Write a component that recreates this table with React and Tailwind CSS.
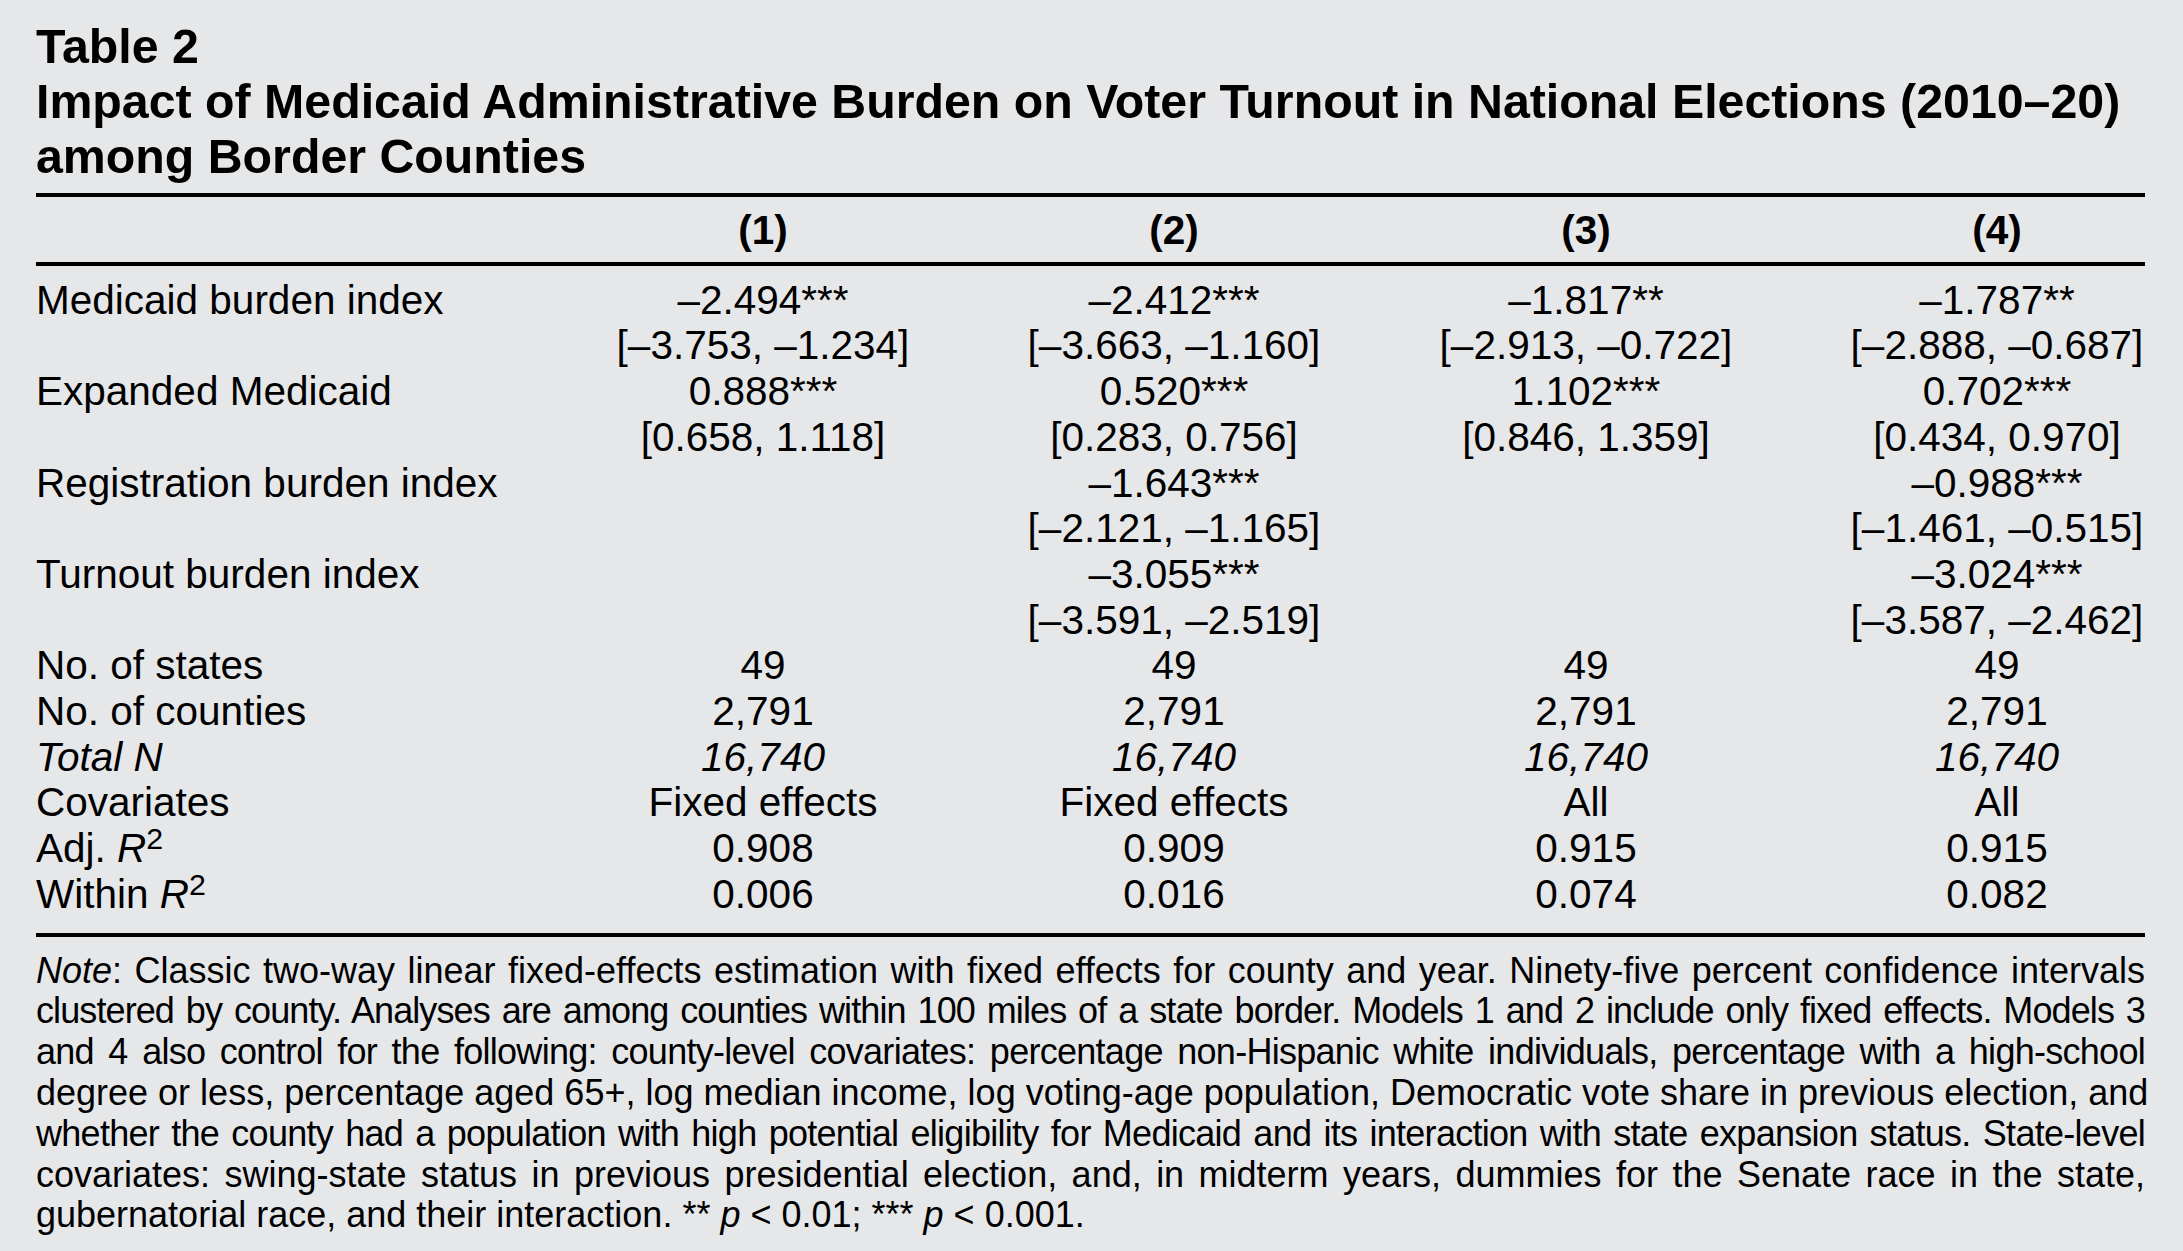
const rows = [
  ['Medicaid burden index', '–2.494***', '–2.412***', '–1.817**', '–1.787**'],
  ['', '[–3.753, –1.234]', '[–3.663, –1.160]', '[–2.913, –0.722]', '[–2.888, –0.687]'],
  ['Expanded Medicaid', '0.888***', '0.520***', '1.102***', '0.702***'],
  ['', '[0.658, 1.118]', '[0.283, 0.756]', '[0.846, 1.359]', '[0.434, 0.970]'],
  ['Registration burden index', '', '–1.643***', '', '–0.988***'],
  ['', '', '[–2.121, –1.165]', '', '[–1.461, –0.515]'],
  ['Turnout burden index', '', '–3.055***', '', '–3.024***'],
  ['', '', '[–3.591, –2.519]', '', '[–3.587, –2.462]'],
  ['No. of states', '49', '49', '49', '49'],
  ['No. of counties', '2,791', '2,791', '2,791', '2,791'],
  ['total', '16,740', '16,740', '16,740', '16,740'],
  ['Covariates', 'Fixed effects', 'Fixed effects', 'All', 'All'],
  ['adj', '0.908', '0.909', '0.915', '0.915'],
  ['within', '0.006', '0.016', '0.074', '0.082'],
];

function Label({ value }) {
  if (value === 'total') return <i>Total N</i>;
  if (value === 'adj')
    return (
      <>
        Adj. <i>R</i>
        <sup className="top-[-0.42em]">2</sup>
      </>
    );
  if (value === 'within')
    return (
      <>
        Within <i>R</i>
        <sup className="top-[-0.42em]">2</sup>
      </>
    );
  return value;
}

const grid = 'grid grid-cols-[465px_524px_298px_526px_296px]';

export default function App() {
  return (
    <main className="min-h-screen bg-[#e6e7e9] text-black font-['Liberation_Sans',Arial,sans-serif]">
      <div className="w-[2109px] ml-[36px] pt-[19px]">
        <h1 className="text-[48.3px] leading-[55px] font-bold">
          <div>Table 2</div>
          <div>Impact of Medicaid Administrative Burden on Voter Turnout in National Elections (2010–20) among Border Counties</div>
        </h1>

        <div className="mt-[9px] h-[4px] bg-black" />
        <div className={`${grid} pt-[11px] pb-[8px] text-[40.5px] leading-[45.7px] font-bold`}>
          <div />
          <div className="text-center">(1)</div>
          <div className="text-center">(2)</div>
          <div className="text-center">(3)</div>
          <div className="text-center">(4)</div>
        </div>
        <div className="h-[4px] bg-black" />

        <div className="pt-[12px] pb-[15px] text-[40.5px] leading-[45.7px]">
          {rows.map((r, i) => (
            <div key={i} className={grid}>
              <div className="whitespace-nowrap">
                <Label value={r[0]} />
              </div>
              {r.slice(1).map((c, j) => (
                <div key={j} className={`text-center whitespace-nowrap ${r[0] === 'total' ? 'italic' : ''}`}>
                  {c}
                </div>
              ))}
            </div>
          ))}
        </div>
        <div className="h-[4px] bg-black" />

        <div className="mt-[14px] text-[36px] leading-[40.8px]">
          <div className="whitespace-nowrap text-justify [text-align-last:justify]">
            <i>Note</i>: Classic two-way linear fixed-effects estimation with fixed effects for county and year. Ninety-five percent confidence intervals
          </div>
          <div className="whitespace-nowrap text-justify [text-align-last:justify] tracking-[-0.025em]">
            clustered by county. Analyses are among counties within 100 miles of a state border. Models 1 and 2 include only fixed effects. Models 3
          </div>
          <div className="whitespace-nowrap text-justify [text-align-last:justify] tracking-[-0.02em]">
            and 4 also control for the following: county-level covariates: percentage non-Hispanic white individuals, percentage with a high-school
          </div>
          <div className="whitespace-nowrap text-justify [text-align-last:justify]">
            degree or less, percentage aged 65+, log median income, log voting-age population, Democratic vote share in previous election, and
          </div>
          <div className="whitespace-nowrap text-justify [text-align-last:justify] tracking-[-0.02em]">
            whether the county had a population with high potential eligibility for Medicaid and its interaction with state expansion status. State-level
          </div>
          <div className="whitespace-nowrap text-justify [text-align-last:justify]">
            covariates: swing-state status in previous presidential election, and, in midterm years, dummies for the Senate race in the state,
          </div>
          <div className="whitespace-nowrap">
            gubernatorial race, and their interaction. ** <i>p</i> &lt; 0.01; *** <i>p</i> &lt; 0.001.
          </div>
        </div>
      </div>
    </main>
  );
}
